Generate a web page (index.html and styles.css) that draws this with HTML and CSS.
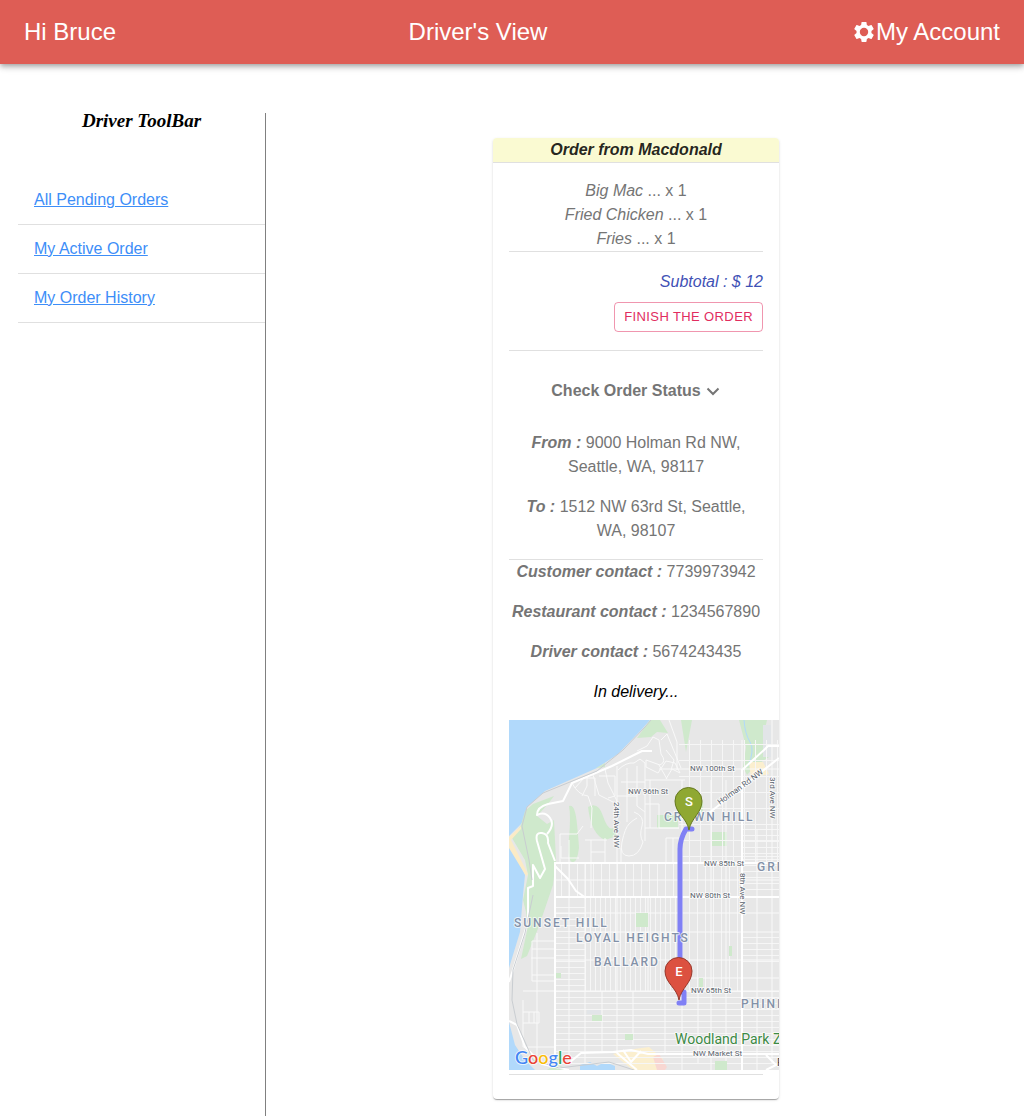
FILE: index.html
```html
<!DOCTYPE html>
<html lang="en">
<head>
<meta charset="utf-8">
<meta name="viewport" content="width=device-width, initial-scale=1">
<title>Driver's View</title>
<link rel="stylesheet" href="styles.css">
</head>
<body>
<header class="app-bar">
  <span>Hi Bruce</span>
  <span>Driver's View</span>
  <a class="account" href="#account">
    <svg class="gear" viewBox="0 0 24 24" aria-hidden="true"><path fill-rule="evenodd" d="M19.43 12.98c.04-.32.07-.64.07-.98s-.03-.66-.07-.98l2.11-1.65c.19-.15.24-.42.12-.64l-2-3.46c-.12-.22-.39-.3-.61-.22l-2.49 1c-.52-.4-1.08-.73-1.69-.98l-.38-2.65C14.46 2.18 14.25 2 14 2h-4c-.25 0-.46.18-.49.42l-.38 2.65c-.61.25-1.17.59-1.69.98l-2.49-1c-.23-.09-.49 0-.61.22l-2 3.46c-.13.22-.07.49.12.64l2.11 1.65c-.04.32-.07.65-.07.98s.03.66.07.98l-2.11 1.65c-.19.15-.24.42-.12.64l2 3.46c.12.22.39.3.61.22l2.49-1c.52.4 1.08.73 1.69.98l.38 2.65c.03.24.24.42.49.42h4c.25 0 .46-.18.49-.42l.38-2.65c.61-.25 1.17-.59 1.69-.98l2.49 1c.23.09.49 0 .61-.22l2-3.46c.12-.22.07-.49-.12-.64l-2.11-1.65zM12 16.2A4.2 4.2 0 1 1 12 7.800a4.200 4.200 0 0 1 0 8.400z"/></svg>My Account</a>
</header>

<div class="layout">
  <nav class="sidebar" aria-label="Driver ToolBar">
    <h2 class="sidebar-title">Driver ToolBar</h2>
    <ul class="menu">
      <li><a href="#pending">All Pending Orders</a></li>
      <li><a href="#active">My Active Order</a></li>
      <li><a href="#history">My Order History</a></li>
    </ul>
  </nav>

  <main class="content">
    <article class="card">
      <h1 class="card-title">Order from Macdonald</h1>
      <div class="card-body">
        <ul class="items">
          <li><em>Big Mac</em> ... x 1</li>
          <li><em>Fried Chicken</em> ... x 1</li>
          <li><em>Fries</em> ... x 1</li>
        </ul>
        <div class="checkout">
          <p class="subtotal">Subtotal : $ 12</p>
          <button class="finish" type="button">FINISH THE ORDER</button>
        </div>
        <button class="status-toggle" type="button" aria-expanded="true">Check Order Status
          <svg class="chevron" viewBox="0 0 16 16" aria-hidden="true"><path d="M2.500 5.500 8 11l5.500-5.500"/></svg>
        </button>
        <div class="addresses">
          <p><b>From :</b> 9000 Holman Rd NW, Seattle, WA, 98117</p>
          <p><b>To :</b> 1512 NW 63rd St, Seattle, WA, 98107</p>
        </div>
        <div class="contacts">
          <p><b>Customer contact :</b> 7739973942</p>
          <p><b>Restaurant contact :</b> 1234567890</p>
          <p><b>Driver contact :</b> 5674243435</p>
          <p class="progress">In delivery...</p>
        </div>
        <div class="map-frame">
          <svg class="map" viewBox="0 0 270 350" role="img" aria-label="Delivery route map">
            <defs>
              <pattern id="avenues-wide" width="8" height="8" patternUnits="userSpaceOnUse"><path class="lane" d="M4.500 0v8"/></pattern>
              <pattern id="avenues-tight" width="5" height="5" patternUnits="userSpaceOnUse"><path class="lane" d="M1.500 0v5"/></pattern>
              <pattern id="streets" width="6" height="6" patternUnits="userSpaceOnUse"><path class="lane" d="M0 1.500h6"/></pattern>
              <pattern id="blocks" width="11" height="16" patternUnits="userSpaceOnUse"><path class="lane" d="M4.500 0v16M0 8.500h11"/></pattern>
            </defs>
            <rect width="270" height="350" fill="#e7e7e7"/>
            <!-- water -->
            <g fill="#b1d9fb">
              <path d="M0 0H141L134 8 109 34 88 48 36 71 18 87 13 103 0 116Z"/>
              <path d="M0 122 16 155 14 175 11 212 0 248ZM0 302 6 325 16 340 26 350H0ZM71 345l10-3 7 4 8-4 10 4v4H71Z"/>
            </g>
            <!-- parks -->
            <g fill="#cfe9cc">
              <path d="M45 76 24 84 16 91 12 105 3 118 16 140 19 155 14 180 17 192 19 206 12 239 18 236 30 206 44 165 47 140 45 100 38 104 28 96 39 84Z"/>
              <path d="M60 86q6-3 8 18t2 24q-2 16-7 14t-3-24-0-32ZM79 87q10-6 15 9t10 12l4 8-12 4q-14-6-17-33ZM87 48l9-5v4Z"/>
              <path d="M141 0h10l8 13-11-1-6 5-14 1ZM172 0h11l-6 32ZM230 0h28q-6 20 2 37l-14 9-8 9-4-8 3-20Z"/>
              <path d="M148 95h21v13h-21ZM203 112h15v14h-15ZM189 82h5v10h-5Z"/>
              <path d="M38 350q10-9 21 0Z"/>
            </g>
            <path fill="none" stroke="#b1d9fb" d="M235 0q1 14 6 22t-2 24"/>
            <path fill="#e2e5e8" d="M254 5h8v32h-8ZM78 289h14v5H78Z"/>
            <path fill="#fbebc6" d="M0 117 12 106v3L2 120l14 28 3 6-2 2L0 128Z"/>
            <path fill="#fbefcf" d="M240 42h14l6 12-18 4ZM104 334l14-4 22-3 14 12-4 11h-26Z"/>
            <path fill="#f8d7d2" d="m144 337 6-3 8 13-2 3h-8Z"/>
            <!-- local street grid -->
            <g>
              <rect x="45" y="143" width="188" height="34" fill="url(#avenues-wide)"/>
              <rect x="76" y="177" width="97" height="94" fill="url(#avenues-tight)"/>
              <rect x="173" y="177" width="60" height="94" fill="url(#avenues-wide)"/>
              <rect x="45" y="183" width="31" height="88" fill="url(#streets)"/>
              <rect x="233" y="105" width="37" height="70" fill="url(#streets)"/>
              <rect x="233" y="215" width="37" height="28" fill="url(#streets)"/>
              <rect x="45" y="271" width="225" height="74" fill="url(#streets)"/>
              <rect x="170" y="20" width="100" height="123" fill="url(#blocks)"/>
            </g>
            <path class="road" d="M28 213v122M60 120v225M76 143v200M93 271v62M108 46v288M124 271v54M139 177v94M156 271v62M173 60v290M189 271v72M202 60v290M217 60v283M233 20v330M248 110v240M263 0v343M45 160h130M173 160h97M45 193h225M76 212h194M45 240h60M120 240h150M173 258h97M23 221h22M23 229h22M22 238h23M23 255h22M23 221v40h22M14 271h256M14 280v47h31M14 292h16v11H14M20 292v11M25 292v11M51 143V114h9M52 126v12h18M82 120v56M96 118v25M76 120h22M82 132h14M60 114h8l6-8"/>
            <!-- winding streets on the bluff -->
            <path class="road" d="M63 63q6 12 16 13l4 12-1 20M66 68l9-10h11v18M78 56v10l-5 10M84 55l6 20 16 8M96 49l3 14 9 18v18M90 56h16v20l-7 2M109 50q8-8 16-7l6-4 5 4v78M112 62h24M118 48v54M108 76h20M128 46v40l8 6M125 92q11 4 8 14t1 16q-4 14-14 14t-7-14 7-18 8-6M112 128v15"/>
            <path class="road" d="M128 31l10-5 6-9 6 3 2 14q6 8-1 11l-14-5v7l12 6 8-12 9 2 5 10-8-4-6 10M152 20l6-6 14 34M157 30l8 10-3 10M160 0l8 22v28M150 49h120M136 60h40M136 84h14v24h20M136 108h34M141 60v48M157 118v25M164 118v25M157 118h16M150 45l8 14"/>
            <path class="avenue" d="M45 143H270M45 177H270M46 143V336M46 146 59 159 67 171 77 178M46 141 39 123q1-9-6-10t-5 8l8 28-5 9-7-13v21l-5 2v34L4 250 0 262M38 114q8-9 3-16t-13-3q0-8 11-11l15-3 4-8 5-10 40-17 30-15h10M200 93l70-55M233 350V50l22-20 4-4h11M0 301l8 4 8 22 17 17 27 6M60 343l12-10 32-1 18-2 17 4h131M108 333l20 17M114 330l8 12 10-11M257 335l10 10-10 5"/>
            <g fill="#cfe9cc">
              <path d="M127 193h12v14h-12ZM47 253h5v5h-5ZM83 295h10v6H83ZM116 314h8v6h-8ZM220 226h3v10h-3ZM190 258h4v9h-4ZM206 341h12v9h-12Z"/>
            </g>
            <path class="railway" d="M142 0 136 7 114 30 88 51 34 73 18 87 13 106 20 140 23 160M24 175 16 213 4 250 3 280 8 304 24 340 50 348 100 342 125 350"/>
            <!-- route -->
            <path class="route" d="M183 109h-6q-6 10-6 20V272h4v11h-5"/>
            <!-- street names -->
            <g class="street">
              <text x="181" y="51">NW 100th St</text>
              <text x="119" y="74">NW 96th St</text>
              <text x="195" y="146">NW 85th St</text>
              <text x="181" y="178">NW 80th St</text>
              <text x="182" y="273">NW 65th St</text>
              <text x="184" y="336">NW Market St</text>
              <text transform="translate(211 85) rotate(-36)">Holman Rd NW</text>
              <text transform="translate(261 57) rotate(90)">3rd Ave NW</text>
              <text transform="translate(231 153) rotate(90)">8th Ave NW</text>
              <text transform="translate(105 82) rotate(90)">24th Ave NW</text>
            </g>
            <!-- neighbourhoods -->
            <g class="district">
              <text x="155" y="101">CROWN HILL</text>
              <text x="248" y="151">GRE</text>
              <text x="5" y="207">SUNSET HILL</text>
              <text x="67" y="222">LOYAL HEIGHTS</text>
              <text x="85" y="246">BALLARD</text>
              <text x="232" y="288">PHINI</text>
            </g>
            <text class="landmark" x="166" y="324">Woodland Park Z</text>
            <text class="district-major" x="268" y="346">F</text>
            <text class="brand" x="6" y="344"><tspan fill="#4285f4">G</tspan><tspan fill="#ea4335">o</tspan><tspan fill="#fbbc05">o</tspan><tspan fill="#4285f4">g</tspan><tspan fill="#34a853">l</tspan><tspan fill="#ea4335">e</tspan></text>
            <!-- start and end pins -->
            <path class="pin pin-start" d="M180 110C178 98 166 93 166 81a13.500 13.500 0 0 1 27 0C193 93 182 98 180 110Z"/>
            <text class="pin-label" x="180" y="86">S</text>
            <path class="pin pin-end" d="M170 280C168 268 156 263 156 251a13.500 13.500 0 0 1 27 0C183 263 172 268 170 280Z"/>
            <text class="pin-label" x="170" y="256">E</text>
          </svg>
        </div>
      </div>
    </article>
  </main>
</div>
</body>
</html>
```

FILE: styles.css
```css
* {
  box-sizing: border-box;
}

body {
  margin: 0;
  min-height: 100vh;
  display: flex;
  flex-direction: column;
  background: #fff;
  color: rgba(0, 0, 0, 0.87);
  font: 16px/24px "Liberation Sans", Arial, sans-serif;
}

h1, h2, p, ul {
  margin: 0;
  padding: 0;
}

ul {
  list-style: none;
}

button {
  font-family: inherit;
  cursor: pointer;
}

/* top bar */
.app-bar {
  display: flex;
  justify-content: space-between;
  align-items: center;
  min-height: 64px;
  padding: 0 24px;
  background: #de5d55;
  color: #fff;
  font-size: 24px;
  line-height: 32px;
  box-shadow: 0 2px 4px -1px rgba(0, 0, 0, 0.2), 0 4px 5px 0 rgba(0, 0, 0, 0.14), 0 1px 10px 0 rgba(0, 0, 0, 0.12);
}

.account {
  display: flex;
  align-items: center;
  padding-left: 12px;
  color: inherit;
  text-decoration: none;
}

.gear {
  width: 24px;
  height: 24px;
  fill: currentColor;
}

/* page columns */
.layout {
  flex: 1;
  display: grid;
  grid-template-columns: 1fr 3fr;
  padding: 49px 18px 0;
}

.sidebar-title {
  margin-bottom: 47px;
  color: #000;
  font: italic bold 19px/16px "Liberation Serif", "Times New Roman", serif;
  text-align: center;
}

.menu li {
  padding: 12px 16px;
  border-bottom: 1px solid #e0e0e0;
}

.menu a {
  color: #3d8ef8;
}

.content {
  display: flex;
  justify-content: center;
  align-items: flex-start;
  padding: 25px 0 17px;
  border-left: 1px solid #808080;
}

/* order card */
.card {
  width: 286px;
  overflow: hidden;
  border-radius: 4px;
  background: #fff;
  box-shadow: 0 2px 1px -1px rgba(0, 0, 0, 0.2), 0 1px 1px 0 rgba(0, 0, 0, 0.14), 0 1px 3px 0 rgba(0, 0, 0, 0.12);
  text-align: center;
}

.card-title {
  border-bottom: 1px solid #e0e0e0;
  background: #fafad2;
  font: italic bold 16px/24px "Liberation Sans", Arial, sans-serif;
}

.card-body {
  padding: 16px 16px 24px;
  color: #757575;
}

.items,
.checkout,
.addresses,
.map-frame {
  border-bottom: 1px solid #e0e0e0;
}

.checkout {
  display: flex;
  flex-direction: column;
  align-items: flex-end;
  gap: 8px;
  padding: 18px 0;
}

.subtotal {
  color: #3f51b5;
  font-style: italic;
}

.finish {
  height: 30px;
  padding: 0 9px;
  border: 1px solid rgba(225, 45, 95, 0.5);
  border-radius: 4px;
  background: none;
  color: #e12d5f;
  font-size: 13px;
  line-height: 24px;
  letter-spacing: 0.03em;
}

.status-toggle {
  display: flex;
  justify-content: center;
  align-items: center;
  gap: 4px;
  width: 100%;
  padding: 28px 0;
  border: 0;
  background: none;
  color: inherit;
  font-size: 16px;
  font-weight: bold;
  line-height: 24px;
}

.chevron {
  width: 16px;
  height: 16px;
  fill: none;
  stroke: currentColor;
  stroke-width: 2;
}

.addresses p {
  padding: 0 8px 16px;
}

.contacts p {
  margin-bottom: 16px;
}

.addresses b,
.contacts b {
  font-style: italic;
}

.contacts .progress {
  color: #000;
  font-style: italic;
}

/* delivery map, runs to the card's right edge */
.map-frame {
  padding-bottom: 4px;
}

.map {
  display: block;
  width: calc(100% + 16px);
  height: auto;
  font-family: Roboto, sans-serif;
}

.lane {
  fill: none;
  stroke: #f6f6f6;
  stroke-width: 1;
}

.road {
  fill: none;
  stroke: #f9f9f9;
  stroke-width: 1;
}

.avenue {
  fill: none;
  stroke: #fff;
  stroke-width: 2;
  stroke-linejoin: round;
}

.railway {
  fill: none;
  stroke: #c9cdd1;
  stroke-width: 1;
}

.route {
  fill: none;
  stroke: #8080f5;
  stroke-width: 5;
  stroke-linecap: round;
  stroke-linejoin: round;
}

.map text {
  paint-order: stroke;
  stroke: rgba(255, 255, 255, 0.7);
  stroke-width: 2px;
  stroke-linejoin: round;
}

.street {
  fill: #5a636d;
  font-size: 8px;
}

.district {
  fill: #8391a8;
  font-size: 12px;
  font-weight: 500;
  letter-spacing: 2px;
}

.landmark {
  fill: #3c8a45;
  font-size: 14px;
}

.district-major {
  fill: #444;
  font-size: 11px;
}

.brand {
  font-family: Lato, sans-serif;
  font-size: 18px;
  font-weight: 500;
}

.pin {
  stroke-width: 1;
}

.pin-start {
  fill: #8fa832;
  stroke: #65781f;
}

.pin-end {
  fill: #dc5140;
  stroke: #96382c;
}

.map .pin-label {
  fill: #fff;
  stroke: none;
  font-size: 13px;
  font-weight: 500;
  text-anchor: middle;
}
```
